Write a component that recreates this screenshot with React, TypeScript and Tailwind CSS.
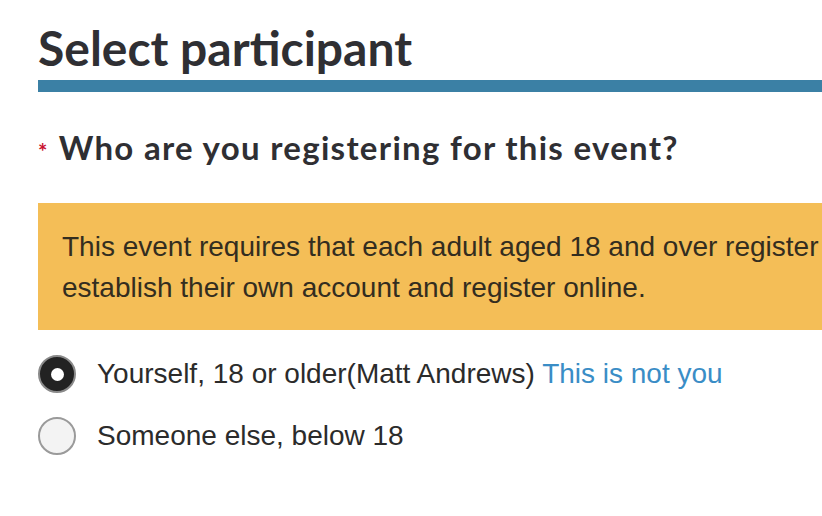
const Radio = ({ checked }: { checked: boolean }) =>
  checked ? (
    <span className="flex h-[38px] w-[38px] shrink-0 items-center justify-center rounded-full border-2 border-[#8a8a8a] bg-[#222]">
      <span className="h-[13px] w-[13px] rounded-full bg-white" />
    </span>
  ) : (
    <span className="h-[38px] w-[38px] shrink-0 rounded-full border-2 border-[#9a9a9a] bg-[#f3f3f3]" />
  );

export default function App() {
  return (
    <div className="h-[516px] w-[822px] overflow-hidden bg-white pl-[38px]">
      <h1 className="pt-[20px] font-['Lato',sans-serif] text-[48px] font-bold leading-[56px] text-[#2f2f33]">
        Select participant
      </h1>
      <div className="mt-[4px] h-[12px] bg-[#3b80a5]" />

      <div className="mt-[35px] flex items-baseline font-['Lato',sans-serif] text-[33px] font-bold leading-[40px] tracking-[1.3px] text-[#2f2f33]">
        <span className="mr-[10px] text-[22px] text-[#c8102e]">*</span>
        Who are you registering for this event?
      </div>

      <div className="mt-[31px] overflow-hidden whitespace-nowrap bg-[#f4be57] px-[24px] pt-[23px] pb-[22px] font-['Liberation_Sans',sans-serif] text-[28px] leading-[41px] text-[#332d1f]">
        This event requires that each adult aged 18 and over register and
        <br />
        establish their own account and register online.
      </div>

      <div className="mt-[24px] flex flex-col gap-[22px] font-['Liberation_Sans',sans-serif] text-[28px] leading-[40px] text-[#2b2b2b]">
        <label className="flex items-center gap-[21px]">
          <Radio checked />
          <span>
            Yourself, 18 or older(Matt Andrews){" "}
            <a className="text-[#3a8dc6]">This is not you</a>
          </span>
        </label>
        <label className="flex items-center gap-[21px]">
          <Radio checked={false} />
          <span>Someone else, below 18</span>
        </label>
      </div>
    </div>
  );
}
